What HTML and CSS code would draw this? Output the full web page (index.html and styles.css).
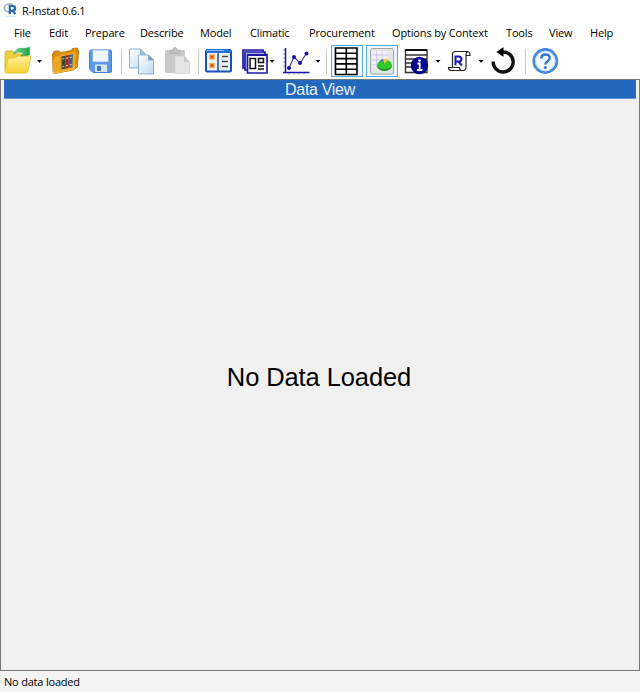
FILE: index.html
```
<!DOCTYPE html>
<html lang="en">
<head>
<meta charset="utf-8">
<title>R-Instat 0.6.1</title>
<link rel="stylesheet" href="styles.css">
</head>
<body>
<div class="window">
<header class="titlebar">
<svg class="logo" width="16" height="16" viewBox="0 0 16 16"><ellipse cx="6.300" cy="6" rx="5" ry="4" fill="none" stroke="#b4b8bf" stroke-width="1.900"/><path d="M6.800 12V4h2.700q2.700 0 2.700 2.300T9.500 8.600H7M9.700 8.600 12.300 12" fill="none" stroke="#2868b8" stroke-width="2.200"/><path d="M2.500 14.500h10.500" stroke="#cfe1f4" stroke-width="1.500" stroke-dasharray="2 .5"/></svg>
<span>R-Instat 0.6.1</span>
</header>
<nav class="menu"><span>File</span><span>Edit</span><span>Prepare</span><span>Describe</span><span>Model</span><span>Climatic</span><span>Procurement</span><span>Options by Context</span><span>Tools</span><span>View</span><span>Help</span></nav>
<div class="toolbar">
<svg width="35" height="34" viewBox="0 44 35 34"><defs><linearGradient id="folder" x2="0" y2="1"><stop stop-color="#fff094"/><stop offset="1" stop-color="#f5d338"/></linearGradient><linearGradient id="green" x2="1"><stop stop-color="#8bd294"/><stop offset="1" stop-color="#20a23d"/></linearGradient></defs><path d="M5 71V53q0-2 2-2h6l2 3h12v5" fill="#edcf48" stroke="#d9b929"/><path d="M5 72.500 7.500 60q.4-2 2-2h5l3-2h12q1.700 0 1.300 2L28 71q-.4 2-2 2H6Q5 73 5 72.500Z" fill="url(#folder)" stroke="#e0bd2d" stroke-width=".8"/><path d="M13.500 54q3-7 10.500-5.500l3-.5 2.500-1V55l-8.500 1 2.500-2.500q-4-3-10 .5Z" fill="url(#green)" stroke="#35a54b" stroke-width=".6"/></svg>
<svg class="arrow" width="11" height="34" viewBox="35 44 11 34"><path d="M37 60h5l-2.500 2.700Z"/></svg>
<svg width="38" height="34" viewBox="46 44 38 34"><path d="M52.500 54l2-3h5l1.500 1.500L71 50.500l1.500-2 5-.5 1 3-1 16-4 3-19 3.500-1.500-2Z" fill="#d98b0c" stroke="#b97109" stroke-width=".8"/><path d="M54 57l6-1.500 1-1.500 15-2.500-1.500 17-20 4Z" fill="#f0a422"/><path d="M61.500 56.500l3.500-.7v13l-3.500.7Z" fill="#35502e"/><path d="M65.200 55.800l3.500-.7v13l-3.500.7Z" fill="#a32238"/><path d="M68.900 55l4-.8-.6 13-3.400.8Z" fill="#36648f"/><path d="M62.300 59l2-.4M62.300 66.500l2-.4M66 58.300l2-.4M66 65.800l2-.4M69.800 57.600l2-.4M69.800 65l2-.4" stroke="#e9d39a"/><path d="M54 60v13l20-4 1-4" fill="none" stroke="#f3b13c" stroke-width="1.500"/></svg>
<svg width="33" height="34" viewBox="84 44 33 34"><path d="M91 50h19q1.500 0 1.500 1.500V71q0 1.500-1.500 1.500H93L89.500 69V51.500Q89.500 50 91 50Z" fill="#5b98e8" stroke="#467fd6"/><path d="M92.500 50h16v11q0 1-1 1h-14q-1 0-1-1Z" fill="#eef6fd" stroke="#6ba9ef" stroke-width=".7"/><path d="M95 64.500h12v7.500H95Z" fill="#d9e4ef"/><path d="M97 66h4v5h-4Z" fill="#3d7ccc"/></svg>
<svg width="42" height="34" viewBox="117 44 42 34"><defs><linearGradient id="page" x2="1" y2="1"><stop stop-color="#fff"/><stop offset="1" stop-color="#bdd8ee"/></linearGradient></defs><path d="M121.500 49v25" stroke="#c6c6c6"/><g fill="url(#page)" stroke="#91afcc"><path d="M129.500 49h11l5 5v14h-16Z"/><path d="M140.500 49v5h5" fill="#9ec3e2"/><path d="M138.500 55h10l5 5v14h-15Z"/><path d="M148.500 55v5h5" fill="#6f9dc7"/></g></svg>
<svg width="42" height="34" viewBox="159 44 42 34"><rect x="165" y="50" width="20" height="23" rx="1.500" fill="#c8c8c8"/><path d="M170 53v-2q0-1 2-1h1q0-2.500 2-2.500t2 2.500h1q2 0 2 1v2Z" fill="#c4c4c4" stroke="#b0b0b0"/><path d="M175 56h9l5.500 6v11.500H175Z" fill="#e4e4e4" stroke="#cdcdcd" stroke-width=".7"/><path d="M184 56v6h5.500Z" fill="#c6c6c6"/><path d="M198.500 49v25" stroke="#c6c6c6"/></svg>
<svg width="38" height="34" viewBox="201 44 38 34"><rect x="206" y="50.500" width="25" height="21" rx="1" fill="#eef4ff" stroke="#1a52bb" stroke-width="2"/><path d="M206 51h25" stroke="#2372d8" stroke-width="4"/><path d="M207 50.500h17" stroke="#88b5f1"/><path d="M218 53v18" stroke="#174ba6" stroke-width="1.500"/><g fill="#e9481d" stroke="#f9a72e" stroke-width="1.300"><rect x="210" y="55" width="4" height="4"/><rect x="210" y="63.500" width="4" height="4"/></g><path d="M222 56.500h6M222 61.500h6M222 66.500h6" stroke="#444" stroke-width="1.300"/></svg>
<svg width="42" height="34" viewBox="239 44 42 34"><g fill="#d9daf4" stroke="#1e1aa7" stroke-width="1.700"><path d="M243 68V50h20v18Z"/><path d="M245 70V52h20v18Z"/><path d="M247.500 73V54.500H267V73Z" fill="#fff"/></g><path d="M247 55h20" stroke="#1e1aa7" stroke-width="2"/><path d="M250 58.500h5.500v10H250ZM258.500 58.500h5v4h-5ZM258 66h6M258 69h6" fill="none" stroke="#111" stroke-width="1.500"/><path d="M269.500 60h5l-2.500 2.700Z"/></svg>
<svg width="49" height="34" viewBox="281 44 49 34"><path d="M285.500 48v25M283 72.500h26.500" fill="none" stroke="#1612ad" stroke-width="1.500"/><path d="M283 50h2M283 54h2M283 58h2M283 62h2M283 66h2M289 73v1.500M294 73v1.500M299 73v1.500M304 73v1.500" stroke="#8e90d0"/><path d="m289 68 5-11 6 6 6.500-9.500" fill="none" stroke="#3c3996" stroke-width="1.200"/><g fill="#1712a6"><circle cx="289" cy="68" r="2"/><circle cx="294" cy="57" r="2"/><circle cx="300" cy="63" r="2"/><circle cx="306.500" cy="53.500" r="2"/></g><path d="M315.500 60h5l-2.500 2.700Z"/><path d="M326.500 49v25" stroke="#c6c6c6"/></svg>
<svg width="35" height="34" viewBox="330 44 35 34"><rect x="331.500" y="45.500" width="31" height="31" fill="#eef7ff" stroke="#58a9e8"/><path d="M335.500 48H357v26.500h-21.500ZM346.300 48v26.500M335.500 53.300H357M335.500 58.600H357M335.500 63.900H357M335.500 69.200H357" fill="#fff" stroke="#000" stroke-width="1.600"/></svg>
<svg width="36" height="34" viewBox="365 44 36 34"><rect x="366.500" y="45.500" width="31" height="31" fill="#e9f4fd" stroke="#58a9e8"/><rect x="370.500" y="48.500" width="23" height="25.500" rx="2" fill="#e5e5e3" stroke="#a3a6a6"/><path d="M372 51h15v16h-15Z" fill="#f3f0ff"/><path d="M372 55h16M372 60h16M372 65h8M376.500 51v16M382 51v9" stroke="#c5bce9" stroke-width=".8"/><ellipse cx="384.500" cy="66" rx="7.300" ry="5" fill="#168c21"/><ellipse cx="384.500" cy="64.500" rx="7.200" ry="4.800" fill="#2fca29"/><path d="m384 64-1-5q3-1 5 1Z" fill="#f6ce35"/><path d="m384 64-4-4 3-1Z" fill="#4a78b4"/></svg>
<svg width="43" height="34" viewBox="401 44 43 34"><path d="M405.500 50H427v22.500h-21.500ZM405.500 55H427M405.500 59H427M405.500 63H427M405.500 67H427" fill="#fff" stroke="#333" stroke-width="1.400"/><path d="M405 50h22" stroke="#111" stroke-width="2"/><circle cx="419.500" cy="65.500" r="8.700" fill="#05058e"/><path d="M417.500 63.500h2.200v6M417 70h5.500" fill="none" stroke="#fff" stroke-width="1.800"/><circle cx="419.500" cy="60.500" r="1.300" fill="#fff"/><path d="M435.500 60h5l-2.500 2.700Z"/></svg>
<svg width="42" height="34" viewBox="444 44 42 34"><path d="M452.500 67V54q0-2.500 3-2.500h11.500q3 0 3 4h-4V67q0 3.500-3 3.500h-12q-2.500 0-2.500-3h11q0 2.500 2 3M466 55.500q0-3.500 2-4" fill="#fff" stroke="#222" stroke-width="1.200"/><path d="M455 65.500M455.500 65.500V56.500h3q3 0 3 2.500t-3 2.500H456M458.500 61.500l3.300 4" fill="none" stroke="#1b18b5" stroke-width="2"/><path d="M478.500 60h5l-2.500 2.700Z"/></svg>
<svg width="42" height="34" viewBox="486 44 42 34"><path d="M502.500 52a10 10 0 1 1-9.300 9.500" fill="none" stroke="#111" stroke-width="3.400"/><path d="m496.500 52 7-5v10Z"/><path d="M525.500 49v25" stroke="#c6c6c6"/></svg>
<svg width="34" height="34" viewBox="528 44 34 34"><circle cx="545.300" cy="61" r="11.600" fill="#f4faff" stroke="#4388dc" stroke-width="2.600"/><circle cx="545.300" cy="61" r="9.800" fill="none" stroke="#b7d6f5"/><path d="M541.300 58.500q0-4 4.200-4t4.200 3.500q0 2-2.300 3.500-2 1.300-2 3" fill="none" stroke="#3179cc" stroke-width="2.400"/><circle cx="545.300" cy="67.500" r="1.500" fill="#3179cc"/></svg>
</div>
<main class="workspace">
<div class="caption">Data View</div>
<div class="empty">No Data Loaded</div>
</main>
<footer class="status">No data loaded</footer>
</div>
</body>
</html>
```
FILE: styles.css
```
* { box-sizing: border-box; }
body { margin: 0; background: #fff; color: #000; font: 11px/16px "Open Sans", "Noto Sans", sans-serif; }
.window { width: 640px; height: 692px; display: flex; flex-direction: column; }
.titlebar { height: 23px; padding: 2px 0 0 3px; display: flex; gap: 3px; align-items: flex-start; }
.titlebar span { line-height: 18px; letter-spacing: -.25px; }
.menu { height: 21px; padding: 2px 0 0 14px; display: grid; grid-template-columns: 35px 36px 55px 60px 50px 59px 83px 114px 43px 41px 40px; white-space: nowrap; letter-spacing: -.16px; }
.toolbar { height: 34px; display: flex; }
.toolbar svg { flex: none; display: block; }
.workspace { height: 593px; margin-top: 1px; border: 1px solid #777; background: #f0f0f0; padding: 0 3px 1px; display: flex; flex-direction: column; height: 592px; }
.caption { height: 19px; background: #2368bd; border-bottom: 1px solid #5f99d9; color: #e8f0f9; text-align: center; font: 16px/19px "Liberation Sans", sans-serif; letter-spacing: -.3px; }
.empty { flex: 1; display: flex; justify-content: center; align-items: center; padding: 0 2px 14px 0; color: #000; font: 25.500px/30px "Liberation Sans", sans-serif; letter-spacing: -.1px; }
.status { flex: 1; background: #f3f3f3; padding: 3px 3px 0 4px; letter-spacing: -.2px; }
```
